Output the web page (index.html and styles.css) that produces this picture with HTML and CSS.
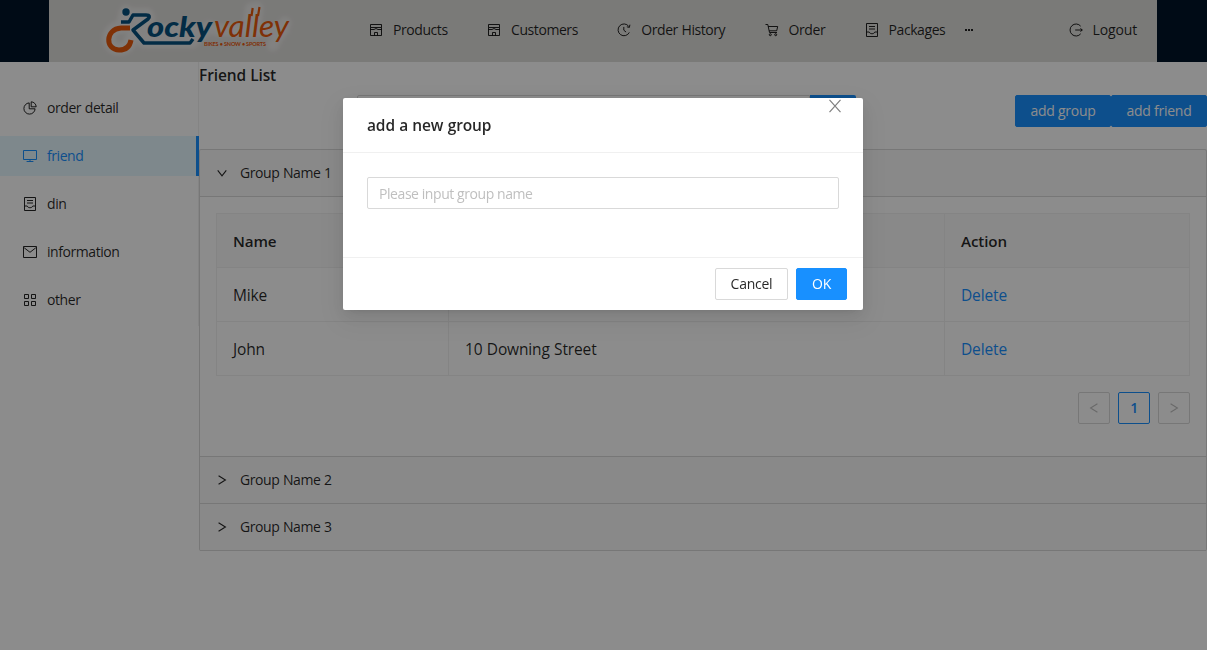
FILE: index.html
```html
<!DOCTYPE html>
<html lang="en">
<head>
<meta charset="utf-8">
<title>Friend List</title>
<link rel="stylesheet" href="styles.css">
</head>
<body>
<svg class="defs" width="0" height="0" aria-hidden="true">
  <symbol id="shop" viewBox="0 0 14 14"><path d="M1.5 1.5h11v3h-11zM1.5 4.500v8h11v-8M1.500 6.500h3.500l2-1 2 1h3.500M5.500 12.500v-3h3v3"/></symbol>
  <symbol id="history" viewBox="0 0 14 14"><path d="M11.700 3.300A5.900 5.900 0 1 0 12.300 9.400M12.900 1.700l-.5 2.700-2.600-.6M6.800 3.900v3.300l2.300 1.900"/></symbol>
  <symbol id="cart" viewBox="0 0 14 14"><path d="M.5 1.500h2.300l1.700 8h7.500M3.300 3.500h9.400l-1 4.300H4.200"/><circle cx="5.300" cy="11.700" r="1"/><circle cx="10.700" cy="11.700" r="1"/></symbol>
  <symbol id="book" viewBox="0 0 14 14"><path d="M1.500.5h11v13h-11zM4 3.500h6M4 6h6M1.700 9h2.500c.8 2.300 4.800 2.300 5.600 0h2.500"/></symbol>
  <symbol id="logout" viewBox="0 0 14 14"><path d="M11.700 3.200a6 6 0 1 0 0 7.600M6.200 7h6.800M11.400 5.500 13.400 7l-2 1.500"/></symbol>
  <symbol id="pie" viewBox="0 0 14 14"><path d="M6.200 1.900a5.600 5.600 0 1 0 5.900 5.900H6.200zM8.200.8v5h5A5.200 5.200 0 0 0 8.200.8z"/></symbol>
  <symbol id="desktop" viewBox="0 0 14 14"><path d="M.5 1.500h13v9H.5zM7 10.500v2M3.600 12.500h6.800"/></symbol>
  <symbol id="mail" viewBox="0 0 14 14"><path d="M.5 1.500h13v11H.5zM1.200 2.800 7 7.300l5.800-4.500"/></symbol>
  <symbol id="grid" viewBox="0 0 14 14"><path d="M1.500 1.500h4v4h-4zM8.500 1.500h4v4h-4zM1.500 8.500h4v4h-4zM8.500 8.500h4v4h-4z"/></symbol>
  <symbol id="down" viewBox="0 0 14 14"><path d="m2 4 5 6.300L12 4"/></symbol>
  <symbol id="right" viewBox="0 0 14 14"><path d="m3 2 8 5-8 5"/></symbol>
  <symbol id="left" viewBox="0 0 14 14"><path d="m11 2-8 5 8 5"/></symbol>
  <symbol id="close" viewBox="0 0 14 14"><path d="m1.500.8 11 12.400M12.500.8l-11 12.400"/></symbol>
</svg>

<header class="topbar">
  <div class="topbar-inner">
    <svg class="logo" viewBox="0 0 200 62" role="img" aria-label="Rocky valley">
      <path class="logo-glow" d="M31 28H22C6 29 6 49 20 50c7 0 11-4 12-10M27 12l-3 10h7l3-7h14l2 4-16 12 11 12h48L110 28M50 31h58M118 31h54l12 0M152 10l-3 24M158 9l-3 24M186 24l-12 22"/>
      <path class="logo-wheel" d="M31 29H22C6 30 6 51 20 51c7 0 11-4 12-10"/>
      <circle class="logo-head" cx="27" cy="13" r="3.700"/>
      <path class="logo-frame" d="M22 23h8l4-7h13c4 0 4 2 2 4L34 31l11 13h46l3-4"/>
      <text class="logo-rocky" x="48" y="38" textLength="65" lengthAdjust="spacingAndGlyphs">ocky</text>
      <text class="logo-valley" x="115" y="38" textLength="75" lengthAdjust="spacingAndGlyphs">valley</text>
      <path class="logo-tall" d="m152.500 17 1.200-8M159 17l1.500-9"/>
      <text class="logo-tag" x="105" y="46.500" textLength="62">BIKES • SNOW • SPORTS</text>
    </svg>
    <nav class="nav">
      <a class="nav-item"><svg class="icon"><use href="#shop"/></svg><span>Products</span></a>
      <a class="nav-item"><svg class="icon"><use href="#shop"/></svg><span>Customers</span></a>
      <a class="nav-item"><svg class="icon"><use href="#history"/></svg><span>Order History</span></a>
      <a class="nav-item"><svg class="icon"><use href="#cart"/></svg><span>Order</span></a>
      <a class="nav-item"><svg class="icon"><use href="#book"/></svg><span>Packages</span></a>
    </nav>
    <span class="more"><i></i><i></i><i></i></span>
    <a class="nav-item logout"><svg class="icon"><use href="#logout"/></svg><span>Logout</span></a>
  </div>
</header>

<div class="layout">
  <aside class="side">
    <a class="side-item"><svg class="icon"><use href="#pie"/></svg>order detail</a>
    <a class="side-item active"><svg class="icon"><use href="#desktop"/></svg>friend</a>
    <a class="side-item"><svg class="icon"><use href="#book"/></svg>din</a>
    <a class="side-item"><svg class="icon"><use href="#mail"/></svg>information</a>
    <a class="side-item"><svg class="icon"><use href="#grid"/></svg>other</a>
  </aside>
  <main class="main">
    <h1 class="title">Friend List</h1>
    <div class="toolbar">
      <div class="search"><div class="search-field"></div><div class="search-btn"></div></div>
      <div class="actions"><button class="btn primary">add group</button><button class="btn primary">add friend</button></div>
    </div>
    <section class="collapse">
      <div class="group-head"><svg class="chevron"><use href="#down"/></svg>Group Name 1</div>
      <div class="group-body">
        <table class="table">
          <thead><tr><th class="col-name">Name</th><th class="col-address"></th><th>Action</th></tr></thead>
          <tbody>
            <tr><td>Mike</td><td></td><td><a class="link">Delete</a></td></tr>
            <tr><td>John</td><td>10 Downing Street</td><td><a class="link">Delete</a></td></tr>
          </tbody>
        </table>
        <div class="pager">
          <span class="page disabled"><svg class="chevron"><use href="#left"/></svg></span>
          <span class="page current">1</span>
          <span class="page disabled"><svg class="chevron"><use href="#right"/></svg></span>
        </div>
      </div>
      <div class="group-head"><svg class="chevron"><use href="#right"/></svg>Group Name 2</div>
      <div class="group-head"><svg class="chevron"><use href="#right"/></svg>Group Name 3</div>
    </section>
  </main>
</div>

<div class="mask">
  <div class="modal" role="dialog">
    <svg class="close"><use href="#close"/></svg>
    <div class="modal-head">add a new group</div>
    <div class="modal-body"><input class="input" placeholder="Please input group name"></div>
    <div class="modal-foot"><button class="btn">Cancel</button><button class="btn primary ok">OK</button></div>
  </div>
</div>
</body>
</html>
```
FILE: styles.css
```css
* { box-sizing: border-box; }
body {
  margin: 0;
  height: 650px;
  overflow: hidden;
  background: #fff;
  color: rgba(0, 0, 0, .85);
  font: 14px/22px "Open Sans", "Noto Sans", sans-serif;
  letter-spacing: -.43px;
  word-spacing: .4px;
}
.defs { display: block; }
svg { fill: none; stroke: currentColor; }
.icon { width: 14px; height: 14px; flex: none; stroke-width: 1; }
.chevron { width: 12px; height: 12px; flex: none; stroke-width: 1.3; }

.topbar { height: 62px; padding: 0 50px 0 49px; background: #001529; }
.topbar-inner { height: 62px; padding-bottom: 2px; background: #dfdedb; display: flex; align-items: center; }
.logo { width: 200px; height: 62px; margin-left: 50px; flex: none; }
.logo text { stroke: none; letter-spacing: 0; word-spacing: 0; }
.logo-glow { stroke: #fff; stroke-width: 12; stroke-linejoin: round; stroke-linecap: round; filter: blur(2px); opacity: .45; }
.logo-rocky { font: italic 900 28px Lato, sans-serif; fill: #07507f; }
.logo-valley { font: italic 400 31px Lato, sans-serif; fill: #e8590c; }
.logo-tag { font: 700 5.5px Lato, sans-serif; fill: #e8590c; }
.logo-wheel { stroke: #e8590c; stroke-width: 5; }
.logo-head { fill: #07507f; stroke: none; }
.logo-frame { stroke: #07507f; stroke-width: 3.5; stroke-linejoin: round; }
.logo-tall { stroke: #e8590c; stroke-width: 2.2; }
.nav { display: flex; gap: 39.4px; margin-left: 70px; }
.nav-item { display: flex; align-items: center; gap: 10px; white-space: nowrap; }
.more { display: flex; gap: 1px; margin-left: 20px; }
.more i { width: 2px; height: 2px; background: currentColor; }
.logout { margin: 0 20px 0 auto; letter-spacing: -.15px; }

.layout { display: flex; }
.side { width: 199px; height: 264px; padding-top: 26px; border-right: 1px solid #f0f0f0; flex: none; display: flex; flex-direction: column; gap: 8px; }
.side-item { height: 40px; margin-right: -1px; padding-left: 23px; display: flex; align-items: center; gap: 10px; }
.side-item.active { background: #e6f7ff; color: #1890ff; border-right: 3px solid #1890ff; }
.main { flex: 1; min-width: 0; }
.title { margin: 0; height: 33px; padding-top: 1px; font-size: 15.5px; line-height: 24px; font-weight: 600; letter-spacing: -.13px; }
.toolbar { display: flex; justify-content: space-between; padding-left: 158px; height: 54px; }
.search { display: flex; width: 499px; height: 32px; }
.search-field { flex: 1; border: 1px solid #d9d9d9; border-radius: 2px 0 0 2px; }
.search-btn { width: 46px; background: #1890ff; border-radius: 0 2px 2px 0; }
.actions { display: flex; }
.actions .btn { width: 96px; padding: 0; }
.btn { height: 32px; padding: 0 15px; border: 1px solid #d9d9d9; border-radius: 2px; background: #fff; color: rgba(0, 0, 0, .85); font: inherit; letter-spacing: -.25px; white-space: nowrap; }
.btn.primary { background: #1890ff; border-color: #1890ff; color: #fff; }

.collapse { border: 1px solid #d9d9d9; border-bottom: 0; border-radius: 2px; background: #fafafa; }
.group-head { height: 47px; padding-left: 16px; display: flex; align-items: center; gap: 12px; border-bottom: 1px solid #d9d9d9; }
.group-body { height: 260px; padding: 16px; border-bottom: 1px solid #d9d9d9; background: #fff; }
.table { width: 974px; table-layout: fixed; border-collapse: collapse; font-size: 15.5px; letter-spacing: -.13px; }
.table th, .table td { height: 54px; padding: 0 16px; text-align: left; border: 1px solid #f0f0f0; }
.table th { background: #fafafa; font-size: 15.2px; font-weight: 600; }
.col-name { width: 232px; }
.col-address { width: 496px; }
.link { color: #1890ff; }
.pager { display: flex; justify-content: flex-end; gap: 8px; margin-top: 16px; }
.page { width: 32px; height: 32px; border: 1px solid #d9d9d9; border-radius: 2px; display: flex; align-items: center; justify-content: center; }
.page.disabled { color: rgba(0, 0, 0, .25); }
.page.current { border-color: #1890ff; color: #1890ff; font-weight: 600; }

.mask { position: fixed; inset: 0; background: rgba(0, 0, 0, .45); display: flex; justify-content: center; align-items: flex-start; padding: 98px 1px 0 0; }
.modal { position: relative; width: 520px; height: 212px; background: #fff; border-radius: 2px; box-shadow: 0 3px 6px -4px rgba(0, 0, 0, .12), 0 6px 16px rgba(0, 0, 0, .08), 0 9px 28px 8px rgba(0, 0, 0, .05); }
.close { position: absolute; top: 1px; right: 21px; width: 14px; height: 14px; color: rgba(0, 0, 0, .5); stroke-width: 1.2; }
.modal-head { height: 55px; padding: 16px 24px; border-bottom: 1px solid #f0f0f0; font-size: 15.5px; font-weight: 600; letter-spacing: -.13px; }
.modal-body { height: 104px; padding: 24px; }
.input { display: block; width: 472px; height: 32px; padding: 0 11px; border: 1px solid #d9d9d9; border-radius: 2px; font: inherit; letter-spacing: inherit; }
.input::placeholder { color: #bfbfbf; }
.modal-foot { height: 53px; padding: 10px 16px; border-top: 1px solid #f0f0f0; display: flex; justify-content: flex-end; gap: 8px; }
.modal-foot .btn { width: 73px; padding: 0; }
.modal-foot .ok { width: 51px; }
```
